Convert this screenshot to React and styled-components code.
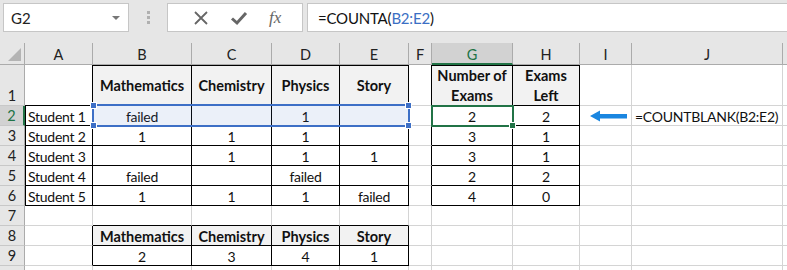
import React from "react"
import styled, { createGlobalStyle } from "styled-components"

const GREEN = "#217346"
const BLUE = "#3d6fc6"
const GRID = "#d4d4d4"

const columns = [
  { name: "A", width: 68 },
  { name: "B", width: 99 },
  { name: "C", width: 80 },
  { name: "D", width: 68 },
  { name: "E", width: 69 },
  { name: "F", width: 23 },
  { name: "G", width: 81 },
  { name: "H", width: 67 },
  { name: "I", width: 52 },
  { name: "J", width: 151 },
  { name: "", width: 8 },
]

const rowHeights = [41, 20, 20, 20, 20, 20, 20, 20, 20, 20]

// bordered ranges: [rowFrom, rowTo, colFrom, colTo] (rows 1-based, cols 0-based)
const ranges = [
  [2, 6, 0, 0],
  [1, 6, 1, 4],
  [1, 6, 6, 7],
  [8, 9, 1, 4],
]

const isBordered = (r, c) =>
  ranges.some(([r1, r2, c1, c2]) => r >= r1 && r <= r2 && c >= c1 && c <= c2)

const headerRows = [1, 8]
const headerCols = { 1: [1, 2, 3, 4, 6, 7], 8: [1, 2, 3, 4] }

const data = {
  1: { B: "Mathematics", C: "Chemistry", D: "Physics", E: "Story", G: "Number of\nExams", H: "Exams\nLeft" },
  2: { A: "Student 1", B: "failed", D: "1", G: "2", H: "2", I: "arrow", J: "=COUNTBLANK(B2:E2)" },
  3: { A: "Student 2", B: "1", C: "1", D: "1", G: "3", H: "1" },
  4: { A: "Student 3", C: "1", D: "1", E: "1", G: "3", H: "1" },
  5: { A: "Student 4", B: "failed", D: "failed", G: "2", H: "2" },
  6: { A: "Student 5", B: "1", C: "1", D: "1", E: "failed", G: "4", H: "0" },
  8: { B: "Mathematics", C: "Chemistry", D: "Physics", E: "Story" },
  9: { B: "2", C: "3", D: "4", E: "1" },
}

const GlobalStyle = createGlobalStyle`
  body {
    margin: 0;
    background: #ffffff;
    font-family: Lato, "Liberation Sans", sans-serif;
  }
`

function App() {
  return (
    <Page>
      <GlobalStyle />
      <Toolbar>
        <NameBox>
          G2
          <DropArrow />
        </NameBox>
        <Grip>
          <span />
          <span />
          <span />
        </Grip>
        <FxButtons>
          <svg width="16" height="16" viewBox="0 0 16 16">
            <path d="M2 2 L14 14 M14 2 L2 14" stroke="#666" strokeWidth="1.8" fill="none" />
          </svg>
          <svg width="18" height="16" viewBox="0 0 18 16">
            <path d="M2 8.5 L7 13 L16 3" stroke="#666" strokeWidth="3" fill="none" />
          </svg>
          <FxLabel>fx</FxLabel>
        </FxButtons>
        <FormulaInput>
          =COUNTA(<Ref>B2:E2</Ref>)
        </FormulaInput>
      </Toolbar>

      <Sheet>
        <Corner />
        {columns.map((col, c) => (
          <ColHeader key={c} $active={col.name === "G"} $last={c === columns.length - 1}>
            {col.name}
          </ColHeader>
        ))}

        {rowHeights.map((h, i) => {
          const r = i + 1
          return (
            <React.Fragment key={r}>
              <RowHeader $active={r === 2}>{r < 10 ? r : ""}</RowHeader>
              {columns.map((col, c) => {
                const value = data[r]?.[col.name]
                const own = isBordered(r, c)
                const isHead = headerRows.includes(r) && headerCols[r].includes(c)
                return (
                  <Cell
                    key={c}
                    $right={own || isBordered(r, c + 1)}
                    $bottom={own || isBordered(r + 1, c)}
                    $left={own && c === 0}
                    $top={own && r === 1}
                    $head={isHead}
                    $align={c === 0 || c === 9 ? "flex-start" : "center"}
                  >
                    {value === "arrow" ? (
                      <svg width="38" height="12" viewBox="0 0 38 12">
                        <polygon points="0,6 10,0.5 10,4 37,4 37,8.5 10,8.5 10,11.5" fill="#1a86e0" />
                      </svg>
                    ) : (
                      value
                    )}
                  </Cell>
                )
              })}
            </React.Fragment>
          )
        })}

        <Selection>
          <Handle style={{ left: -4, top: -4 }} />
          <Handle style={{ right: -4, top: -4 }} />
          <Handle style={{ left: -4, bottom: -4 }} />
          <Handle style={{ right: -4, bottom: -4 }} />
        </Selection>
        <ActiveCell>
          <FillHandle />
        </ActiveCell>
      </Sheet>
    </Page>
  )
}

const Page = styled.div`
  width: 787px;
  height: 270px;
  overflow: hidden;
  background: #e6e6e6;
`

const Toolbar = styled.div`
  display: flex;
  align-items: flex-start;
  height: 43px;
  padding: 3px 0 0 3px;
  box-sizing: border-box;
`

const Box = styled.div`
  height: 29px;
  box-sizing: border-box;
  background: #ffffff;
  border: 1px solid #c6c6c6;
  display: flex;
  align-items: center;
`

const NameBox = styled(Box)`
  width: 126px;
  padding-left: 7px;
  font-size: 15px;
  color: #222;
  position: relative;
`

const DropArrow = styled.span`
  position: absolute;
  right: 8px;
  top: 12px;
  border-left: 4px solid transparent;
  border-right: 4px solid transparent;
  border-top: 4px solid #777;
`

const Grip = styled.div`
  width: 38px;
  height: 29px;
  display: flex;
  flex-direction: column;
  align-items: center;
  justify-content: center;
  gap: 2px;
  span {
    width: 3px;
    height: 3px;
    background: #b0b0b0;
  }
`

const FxButtons = styled(Box)`
  width: 136px;
  justify-content: space-around;
  padding: 0 10px 0 14px;
`

const FxLabel = styled.span`
  font-family: "Liberation Serif", serif;
  font-style: italic;
  font-size: 17px;
  color: #666;
`

const FormulaInput = styled(Box)`
  flex: 1;
  margin-left: 4px;
  margin-right: -4px;
  padding-left: 10px;
  font-size: 15px;
  color: #111;
  letter-spacing: -0.2px;
`

const Ref = styled.span`
  color: #3b6fc4;
`

const Sheet = styled.div`
  position: relative;
  display: grid;
  grid-template-columns: 25px ${columns.map((c) => c.width + "px").join(" ")};
  grid-template-rows: 22px ${rowHeights.map((h) => h + "px").join(" ")};
  background: #ffffff;
  font-size: 14px;
  letter-spacing: -0.25px;
  color: #111;
`

const Corner = styled.div`
  background: #e6e6e6;
  border-right: 1px solid #ababab;
  border-bottom: 1px solid #ababab;
  position: relative;
  &::after {
    content: "";
    position: absolute;
    right: 3px;
    bottom: 3px;
    border-left: 13px solid transparent;
    border-bottom: 13px solid #b4b4b4;
  }
`

const ColHeader = styled.div`
  background: ${({ $active }) => ($active ? "#d2d2d2" : "#e6e6e6")};
  color: ${({ $active }) => ($active ? GREEN : "#222")};
  border-right: ${({ $last }) => ($last ? "none" : "1px solid #ababab")};
  border-bottom: ${({ $active }) => ($active ? `2px solid ${GREEN}` : "1px solid #ababab")};
  display: flex;
  align-items: center;
  justify-content: center;
  padding-top: 2px;
  font-size: 14.5px;
  letter-spacing: 0;
`

const RowHeader = styled.div`
  background: ${({ $active }) => ($active ? "#d2d2d2" : "#e6e6e6")};
  color: ${({ $active }) => ($active ? GREEN : "#222")};
  border-right: ${({ $active }) => ($active ? `2px solid ${GREEN}` : "1px solid #ababab")};
  border-bottom: 1px solid #c8c8c8;
  display: flex;
  align-items: flex-end;
  justify-content: center;
  padding-bottom: 1px;
  font-size: 14.5px;
  letter-spacing: 0;
`

const Cell = styled.div`
  box-sizing: border-box;
  display: flex;
  align-items: center;
  justify-content: ${({ $align }) => $align};
  text-align: center;
  padding: 2px 3px 0;
  white-space: pre;
  line-height: 20px;
  overflow: visible;
  background: ${({ $head }) => ($head ? "#f2f2f2" : "#ffffff")};
  font-weight: ${({ $head }) => ($head ? 700 : 400)};
  font-size: ${({ $head }) => ($head ? "14.5px" : "14px")};
  letter-spacing: ${({ $head }) => ($head ? "0" : "-0.25px")};
  border-right: 1px solid ${({ $right }) => ($right ? "#000" : GRID)};
  border-bottom: 1px solid ${({ $bottom }) => ($bottom ? "#000" : GRID)};
  box-shadow: ${({ $left, $top }) =>
    [$left && "inset 1px 0 0 #000", $top && "inset 0 1px 0 #000"].filter(Boolean).join(", ") || "none"};
  svg {
    margin-left: 6px;
    margin-top: -2px;
  }
`

const Selection = styled.div`
  position: absolute;
  left: 92px;
  top: 61px;
  width: 318px;
  height: 23px;
  box-sizing: border-box;
  border: 2px solid ${BLUE};
  background: rgba(60, 110, 200, 0.1);
  pointer-events: none;
`

const Handle = styled.span`
  position: absolute;
  width: 5px;
  height: 5px;
  background: ${BLUE};
  border: 1px solid #ffffff;
`

const ActiveCell = styled.div`
  position: absolute;
  left: 431px;
  top: 62px;
  width: 83px;
  height: 22px;
  box-sizing: border-box;
  border: 2px solid ${GREEN};
  pointer-events: none;
`

const FillHandle = styled.span`
  position: absolute;
  right: -4px;
  bottom: -4px;
  width: 5px;
  height: 5px;
  background: ${GREEN};
  border: 1px solid #ffffff;
`

export default App
